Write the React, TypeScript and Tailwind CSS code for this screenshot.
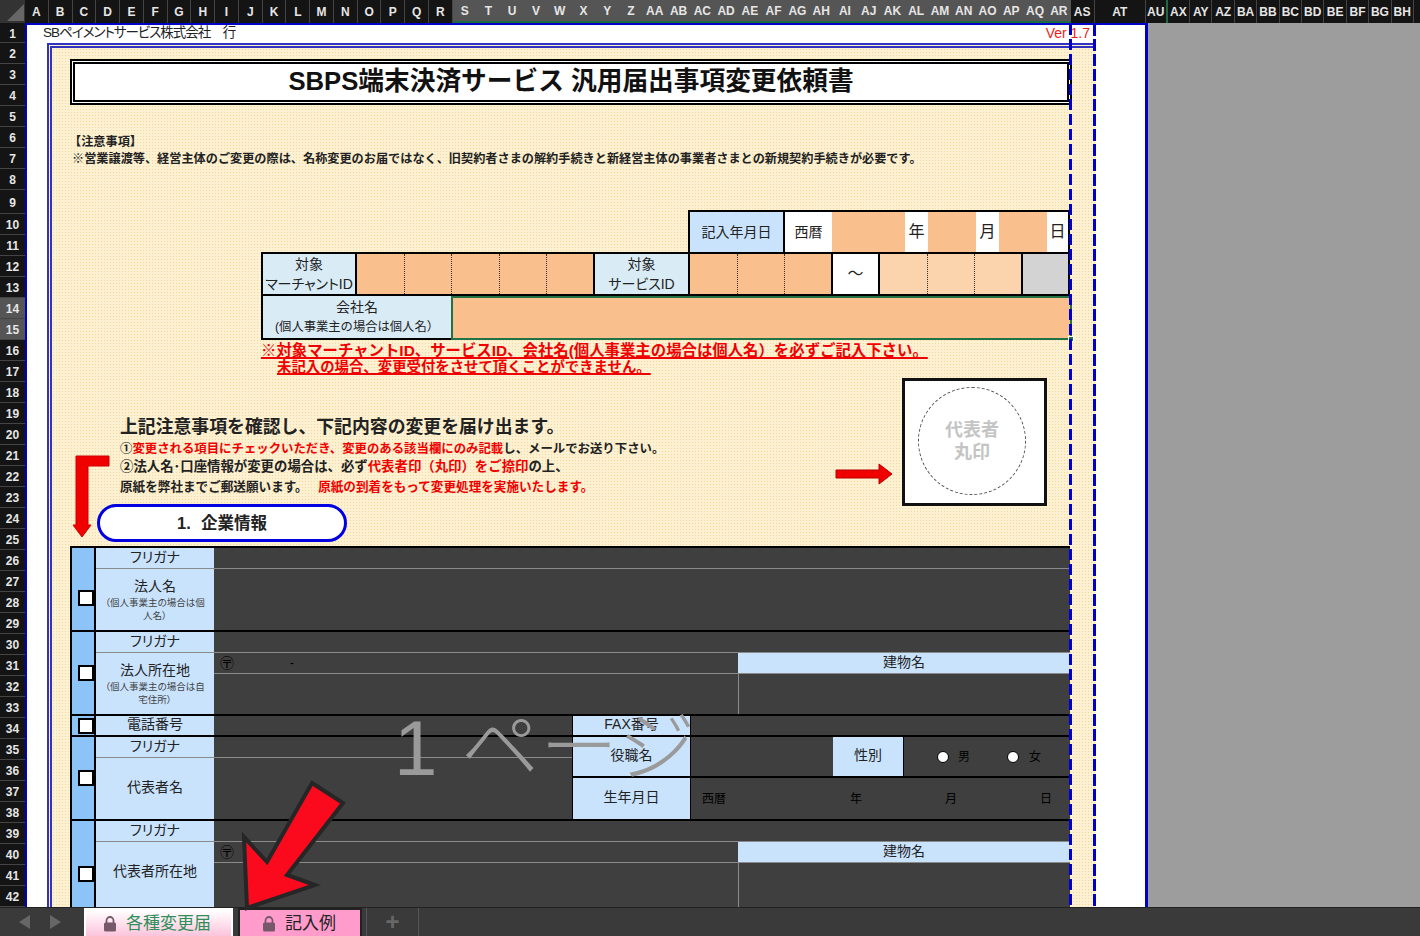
import type { ReactNode } from 'react'

const colsA = ['A','B','C','D','E','F','G','H','I','J','K','L','M','N','O','P','Q','R']
const colsB = ['S','T','U','V','W','X','Y','Z','AA','AB','AC','AD','AE','AF','AG','AH','AI','AJ','AK','AL','AM','AN','AO','AP','AQ','AR']
const colsC = ['AX','AY','AZ','BA','BB','BC','BD','BE','BF','BG','BH']
const rows = Array.from({ length: 42 }, (_, i) => i + 1)

const label = "flex items-center justify-center bg-[#c9e3fd] pb-[2px] text-[#222] text-[14px] [font-feature-settings:'palt']"

function Lock({ color }: { color: string }) {
  return (
    <svg width="14" height="16" viewBox="0 0 14 16">
      <path d="M3.5 7V4.5a3.5 3.5 0 0 1 7 0V7" fill="none" stroke={color} strokeWidth="1.8" />
      <rect x="1" y="6.5" width="12" height="9" rx="1.5" fill={color} />
    </svg>
  )
}

function Check() {
  return <div className="h-[16px] w-[16px] shrink-0 border-2 border-black bg-white" />
}

function CheckCol({ children, className }: { children: ReactNode; className?: string }) {
  return <div className={`flex w-[24px] shrink-0 items-center justify-center border-r-2 border-black bg-[#8cc4f7] pl-[6px] ${className ?? ''}`}>{children}</div>
}

function AddressRows({ building }: { building: string }) {
  return (
    <div className="flex flex-1 flex-col">
      <div className="flex h-[21px] border-b border-[#8a8a8a]">
        <div className="flex flex-1 items-center pl-[6px] text-[14px] text-black">
          <span>〶</span>
          <span className="ml-[56px] text-[12px]">-</span>
        </div>
        <div className={`${label} w-[332px]`}>{building}</div>
      </div>
      <div className="flex flex-1">
        <div className="flex-1 border-r border-[#8a8a8a]" />
        <div className="w-[331px]" />
      </div>
    </div>
  )
}

export default function App() {
  return (
    <div className="relative h-[936px] w-[1420px] overflow-hidden bg-[#9d9d9d] font-['Liberation_Sans','Noto_Sans_CJK_JP',sans-serif]">
      {/* column headers */}
      <div className="flex h-[23px] bg-[#141414] text-[12px] font-bold text-[#e6e6e6]">
        <div className="relative w-[25px] shrink-0 bg-[#333]">
          <div className="absolute bottom-[2px] right-[1px] h-0 w-0 border-b-[17px] border-l-[17px] border-b-[#666] border-l-transparent" />
        </div>
        {colsA.map(c => (
          <div key={c} className="flex w-[23.77px] items-center justify-center border-r border-[#444]">{c}</div>
        ))}
        {colsB.map(c => (
          <div key={c} className="flex w-[23.77px] items-center justify-center border-b-2 border-b-[#1d6b43] bg-[#555]">{c}</div>
        ))}
        <div className="flex w-[24px] items-center justify-center border-r border-[#444]">AS</div>
        <div className="flex w-[51px] items-center justify-center border-r border-[#444]">AT</div>
        <div className="flex w-[22px] items-center justify-center border-r-2 border-r-[#1d6b43]">AU</div>
        {colsC.map(c => (
          <div key={c} className="flex w-[22.4px] items-center justify-center border-r border-[#444]">{c}</div>
        ))}
        <div className="flex-1" />
      </div>

      <div className="flex h-[884px]">
        {/* row numbers */}
        <div className="w-[25px] shrink-0 bg-[#141414] text-[12px] font-bold text-[#e6e6e6]">
          {rows.map(r => (
            <div
              key={r}
              className={`flex items-center justify-center border-b border-[#444] pt-[2px] ${r === 1 ? 'h-[20px]' : r === 9 ? 'h-[24px]' : 'h-[21px]'} ${r === 14 || r === 15 ? 'bg-[#555]' : ''}`}
            >
              {r}
            </div>
          ))}
        </div>

        {/* sheet */}
        <div className="w-[1123px] shrink-0 overflow-hidden border-l-2 border-r-[3px] border-t-2 border-[#0000c8] bg-white">
          <div className="flex h-[18px] items-center justify-between pb-[2px] pl-[16px] pr-[55px] text-[14px] leading-[16px] text-[#222]">
            <span className="text-[13.5px] tracking-[-1px] [font-feature-settings:'palt']">SBペイメントサービス株式会社　行</span>
            <span className="text-[#f01c1c]">Ver 1.7</span>
          </div>

          <div className="ml-[20px] h-[864px] w-[1049px] overflow-hidden border-l-[5px] border-t-[5px] border-double border-[#3232c0] bg-[#fdf1d2] bg-[radial-gradient(#efd9a0_0.6px,transparent_0.7px)] bg-[length:3px_3px] pl-[18px]">
            {/* title */}
            <div className="mt-[11px] flex h-[46px] w-[1002px] items-center justify-center border-[5px] border-double border-black bg-white pb-[2px] text-[25.7px] font-bold text-[#111]">
              SBPS端末決済サービス 汎用届出事項変更依頼書
            </div>

            {/* notice */}
            <div className="mt-[29px] pl-[2px] text-[12.17px] font-bold leading-[17px] text-[#222]">
              <p className="ml-[-3px]">【注意事項】</p>
              <p className="whitespace-nowrap">※営業譲渡等、経営主体のご変更の際は、名称変更のお届ではなく、旧契約者さまの解約手続きと新経営主体の事業者さまとの新規契約手続きが必要です。</p>
            </div>

            {/* date */}
            <div className="ml-[618px] mt-[42px] flex h-[44px] w-[382px] border-2 border-black text-[14px] text-[#222]">
              <div className="flex w-[95px] items-center justify-center border-r-2 border-black bg-[#c9e3fd]">記入年月日</div>
              <div className="flex w-[47px] items-center justify-center bg-white">西暦</div>
              <div className="w-[73px] bg-[#f9bf8c]" />
              <div className="flex w-[23px] items-center justify-center bg-white text-[16px]">年</div>
              <div className="w-[48px] bg-[#f9bf8c]" />
              <div className="flex w-[23px] items-center justify-center bg-white text-[16px]">月</div>
              <div className="w-[48px] bg-[#f9bf8c]" />
              <div className="flex w-[21px] items-center justify-center bg-white text-[16px]">日</div>
            </div>

            {/* merchant id / service id */}
            <div className="ml-[191px] mt-[-2px] flex h-[44px] w-[809px] border-2 border-black text-[14px] leading-[20px] text-[#222]">
              <div className="flex w-[94px] flex-col items-center justify-center border-r-2 border-black bg-[#d9ecf6] [font-feature-settings:'palt']">
                <span>対象</span>
                <span className="whitespace-nowrap">マーチャントID</span>
              </div>
              <div className="w-[48px] border-r border-dotted border-[#333] bg-[#f9bf8c]" />
              <div className="w-[47px] border-r border-dotted border-[#333] bg-[#f9bf8c]" />
              <div className="w-[48px] border-r border-dotted border-[#333] bg-[#f9bf8c]" />
              <div className="w-[47px] border-r border-dotted border-[#333] bg-[#f9bf8c]" />
              <div className="w-[48px] border-r-2 border-black bg-[#f9bf8c]" />
              <div className="flex w-[95px] flex-col items-center justify-center border-r-2 border-black bg-[#d9ecf6] [font-feature-settings:'palt']">
                <span>対象</span>
                <span className="whitespace-nowrap">サービスID</span>
              </div>
              <div className="w-[48px] border-r border-dotted border-[#333] bg-[#f9bf8c]" />
              <div className="w-[47px] border-r border-dotted border-[#333] bg-[#f9bf8c]" />
              <div className="w-[48px] border-r-2 border-black bg-[#f9bf8c]" />
              <div className="flex w-[47px] items-center justify-center border-r-2 border-black bg-white text-[16px]">～</div>
              <div className="w-[48px] border-r border-dotted border-[#333] bg-[#fbd3ad]" />
              <div className="w-[47px] border-r border-dotted border-[#333] bg-[#fbd3ad]" />
              <div className="w-[48px] border-r-2 border-black bg-[#fbd3ad]" />
              <div className="flex-1 bg-[#d3d3d3]" />
            </div>

            {/* company */}
            <div className="relative ml-[191px] flex h-[44px] w-[811px] text-[#222]">
              <div className="flex w-[190px] flex-col items-center justify-center border-b-2 border-l-2 border-black bg-[#d9ecf6] leading-[20px]">
                <span className="text-[14px]">会社名</span>
                <span className="whitespace-nowrap text-[12.3px]">(個人事業主の場合は個人名）</span>
              </div>
              <div className="flex-1 border-2 border-[#217346] bg-[#f9bf8c]" />
              <div className="absolute bottom-[-2px] right-[-2px] h-[6px] w-[6px] border border-white bg-[#217346]" />
            </div>

            <div className="mt-[3px] font-bold leading-[16px] text-[#f00000]">
              <p className="ml-[191px] whitespace-nowrap text-[15.4px] underline decoration-2">※対象マーチャントID、サービスID、会社名(個人事業主の場合は個人名）を必ずご記入下さい。</p>
              <p className="ml-[207px] whitespace-nowrap text-[14.4px] underline decoration-2">未記入の場合、変更受付をさせて頂くことができません。</p>
            </div>

            {/* instructions + stamp */}
            <div className="flex h-[171px] w-[1000px]">
              <div className="flex-1 pt-[40px]">
                <h2 className="ml-[50px] whitespace-nowrap text-[17.85px] font-bold leading-[24px] text-[#222]">上記注意事項を確認し、下記内容の変更を届け出ます。</h2>
                <div className="ml-[50px] mt-[1px] whitespace-nowrap font-bold leading-[18px] text-[#222]">
                  <p className="text-[12.4px]">①<span className="text-[#f00000]">変更される項目にチェックいただき、変更のある該当欄にのみ記載</span>し、メールでお送り下さい。</p>
                  <p className="text-[13.4px]">②法人名･口座情報が変更の場合は、必ず<span className="text-[#f00000]">代表者印（丸印）をご捺印</span>の上、</p>
                  <p className="mt-[2px] text-[12.6px]">原紙を弊社までご郵送願います。 <span className="ml-[7px] text-[#f00000]">原紙の到着をもって変更処理を実施いたします。</span></p>
                </div>
                <div className="ml-[27px] mt-[8px] flex h-[38px] w-[250px] items-center justify-center rounded-full border-[3px] border-[#0000e0] bg-white text-[16.5px] font-bold text-[#222]">
                  <span>1.</span>
                  <span className="ml-[10px]">企業情報</span>
                </div>
              </div>
              <svg className="mr-[9px] mt-[88px] shrink-0" width="58" height="22" viewBox="0 0 58 22">
                <path d="M1 7H44V1L57 11L44 21V15H1Z" fill="#f00000" stroke="#b00" strokeWidth="1" />
              </svg>
              <div className="mr-[23px] mt-[3px] flex h-[128px] w-[145px] shrink-0 items-center justify-center border-[3px] border-[#111] bg-white">
                <div className="mb-[2px] mr-[5px] flex h-[108px] w-[108px] flex-col items-center justify-center rounded-full border border-dashed border-[#555] text-[18px] font-bold leading-[22px] text-[#c4c4c4]">
                  <span>代表者</span>
                  <span>丸印</span>
                </div>
              </div>
            </div>

            {/* form */}
            <div className="w-[1000px] border-l-2 border-t-2 border-black bg-[#3f3f3f] text-black">
              <div className="flex h-[84px] border-b-2 border-black">
                <CheckCol className="pt-[18px]"><Check /></CheckCol>
                <div className="flex flex-1 flex-col">
                  <div className="flex h-[21px] border-b border-[#8a8a8a]">
                    <div className={`${label} w-[118px]`}>フリガナ</div>
                  </div>
                  <div className="flex flex-1">
                    <div className={`${label} w-[118px] flex-col`}>
                      <span className="leading-[20px]">法人名</span>
                      <span className="px-[6px] text-center text-[9.5px] leading-[13px] text-[#444]">（個人事業主の場合は個人名）</span>
                    </div>
                  </div>
                </div>
              </div>

              <div className="flex h-[84px] border-b-2 border-black">
                <CheckCol><Check /></CheckCol>
                <div className="flex flex-1 flex-col">
                  <div className="flex h-[21px] border-b border-[#8a8a8a]">
                    <div className={`${label} w-[118px]`}>フリガナ</div>
                  </div>
                  <div className="flex flex-1">
                    <div className={`${label} w-[118px] shrink-0 flex-col`}>
                      <span className="leading-[20px]">法人所在地</span>
                      <span className="px-[6px] text-center text-[9.5px] leading-[13px] text-[#444]">（個人事業主の場合は自宅住所）</span>
                    </div>
                    <AddressRows building="建物名" />
                  </div>
                </div>
              </div>

              <div className="flex h-[21px] border-b-2 border-black">
                <CheckCol><Check /></CheckCol>
                <div className={`${label} w-[118px]`}>電話番号</div>
                <div className="w-[358px]" />
                <div className={`${label} w-[119px] border-x border-black`}>FAX番号</div>
              </div>

              <div className="flex h-[84px] border-b-2 border-black">
                <CheckCol><Check /></CheckCol>
                <div className="flex w-[476px] flex-col">
                  <div className="flex h-[21px] border-b border-[#8a8a8a]">
                    <div className={`${label} w-[118px]`}>フリガナ</div>
                  </div>
                  <div className="flex flex-1">
                    <div className={`${label} w-[118px]`}>代表者名</div>
                  </div>
                </div>
                <div className="flex flex-1 flex-col">
                  <div className="flex h-[41px] border-b-2 border-black">
                    <div className={`${label} w-[119px] border-x border-black`}>役職名</div>
                    <div className="w-[142px]" />
                    <div className={`${label} w-[71px] border-r border-black`}>性別</div>
                    <div className="flex flex-1 items-center pl-[33px] text-[12px]">
                      <span className="h-[12px] w-[12px] rounded-full border border-black bg-white" />
                      <span className="ml-[9px]">男</span>
                      <span className="ml-[37px] h-[12px] w-[12px] rounded-full border border-black bg-white" />
                      <span className="ml-[10px]">女</span>
                    </div>
                  </div>
                  <div className="flex flex-1">
                    <div className={`${label} w-[119px] border-x border-black`}>生年月日</div>
                    <div className="flex flex-1 items-center pl-[11px] text-[12px]">
                      <span>西暦</span>
                      <span className="ml-[124px]">年</span>
                      <span className="ml-[83px]">月</span>
                      <span className="ml-[83px]">日</span>
                    </div>
                  </div>
                </div>
              </div>

              <div className="flex h-[90px]">
                <CheckCol className="pt-[16px]"><Check /></CheckCol>
                <div className="flex flex-1 flex-col">
                  <div className="flex h-[21px] border-b border-[#8a8a8a]">
                    <div className={`${label} w-[118px]`}>フリガナ</div>
                  </div>
                  <div className="flex flex-1">
                    <div className={`${label} w-[118px] shrink-0 !pb-[10px]`}>代表者所在地</div>
                    <AddressRows building="建物名" />
                  </div>
                </div>
              </div>
            </div>
          </div>
        </div>

        <div className="flex-1 bg-[#9d9d9d]" />
      </div>

      {/* sheet tabs */}
      <div className="relative z-10 flex h-[29px] border-t border-[#222] bg-[#3a3a3a]">
        <div className="flex w-[84px] items-center pl-[19px]">
          <span className="h-0 w-0 border-y-[7px] border-r-[11px] border-y-transparent border-r-[#666]" />
          <span className="ml-[20px] h-0 w-0 border-y-[7px] border-l-[11px] border-y-transparent border-l-[#666]" />
        </div>
        <div className="flex w-[149px] items-center gap-[9px] border-x-2 border-t-2 border-white bg-gradient-to-b from-white to-[#fbc4dc] pl-[17px] pt-[2px] text-[17px] text-[#2f8f5b]">
          <Lock color="#75586a" />
          <span>各種変更届</span>
        </div>
        <div className="ml-[5px] flex w-[124px] items-center gap-[9px] border-x-2 border-t-2 border-[#222] bg-[#ff9ccc] pl-[22px] pt-[2px] text-[17px] text-[#222]">
          <Lock color="#75586a" />
          <span>記入例</span>
        </div>
        <div className="ml-[4px] flex w-[53px] items-center justify-center border-x border-[#555] text-[24px] font-bold leading-none text-[#666]">+</div>
      </div>

      {/* page break lines */}
      <div className="absolute left-[1069px] top-[24px] h-[883px] w-[3px] bg-[repeating-linear-gradient(to_bottom,#0000c8_0,#0000c8_11px,transparent_11px,transparent_15px)]" />
      <div className="absolute left-[1093px] top-[24px] h-[883px] w-[3px] bg-[repeating-linear-gradient(to_bottom,#0000c8_0,#0000c8_12px,transparent_12px,transparent_15px)]" />

      {/* elbow arrow */}
      <svg className="absolute left-[72px] top-[455px]" width="40" height="84" viewBox="0 0 40 84">
        <path d="M4 1H37V11H16V70H19L10 82L1 70H4Z" fill="#f00000" stroke="#c00" strokeWidth="1" />
      </svg>

      {/* watermark */}
      <div className="pointer-events-none absolute left-[394px] top-[698px] z-10 whitespace-nowrap text-[78px] font-light leading-[100px] tracking-[1px] text-[#9a9a9a]">
        1 ページ
      </div>

      {/* big arrow */}
      <svg className="absolute left-[238px] top-[778px] z-20" width="112" height="134" viewBox="0 0 112 134">
        <path d="M74 5L105 25L49 97L77 107L9 130L6 59L29 84Z" fill="#fb0a1e" stroke="#262626" strokeWidth="4" />
      </svg>
    </div>
  )
}
